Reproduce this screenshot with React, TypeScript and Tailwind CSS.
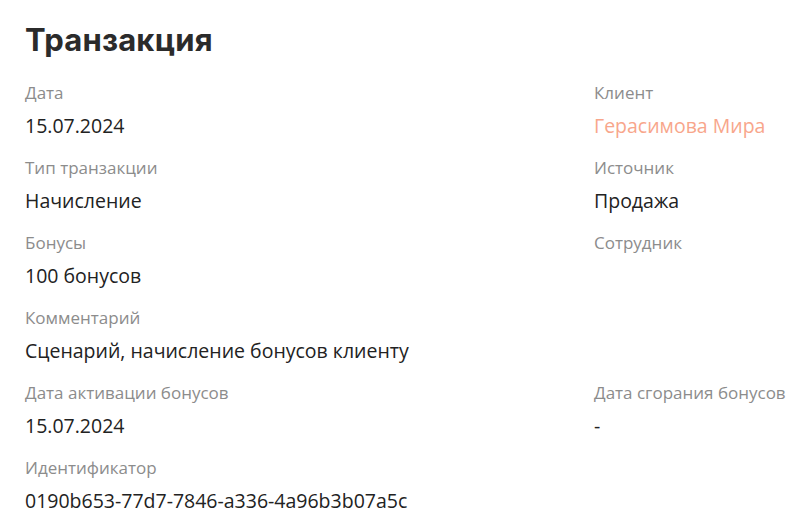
import React from "react";

function Field({ label, value, accent }: { label: string; value: string; accent?: boolean }) {
  return (
    <div className="flex flex-col">
      <div className="text-[17px] leading-[20px] text-[#8c8c8c] mb-[11px] whitespace-nowrap">{label}</div>
      <div className={`text-[19.5px] leading-[24px] whitespace-nowrap ${accent ? "text-[#f8a68b]" : "text-[#222222]"}`}>{value || "\u00a0"}</div>
    </div>
  );
}

export default function App() {
  return (
    <div className="w-[803px] h-[521px] bg-white pl-[25px] pt-[20px] overflow-hidden" style={{ fontFamily: '"Open Sans", sans-serif' }}>
      <h1 className="text-[31px] leading-[40px] font-bold text-[#2b2b2b] tracking-[0.2px]" style={{ fontFamily: 'Inter, "Open Sans", sans-serif' }}>
        Транзакция
      </h1>
      <div className="mt-[23px] grid grid-cols-[569px_1fr] gap-y-[20px]">
        <Field label="Дата" value="15.07.2024" />
        <Field label="Клиент" value="Герасимова Мира" accent />
        <Field label="Тип транзакции" value="Начисление" />
        <Field label="Источник" value="Продажа" />
        <Field label="Бонусы" value="100 бонусов" />
        <Field label="Сотрудник" value="" />
        <div className="col-span-2">
          <Field label="Комментарий" value="Сценарий, начисление бонусов клиенту" />
        </div>
        <Field label="Дата активации бонусов" value="15.07.2024" />
        <Field label="Дата сгорания бонусов" value="-" />
        <div className="col-span-2">
          <Field label="Идентификатор" value="0190b653-77d7-7846-a336-4a96b3b07a5c" />
        </div>
      </div>
    </div>
  );
}
